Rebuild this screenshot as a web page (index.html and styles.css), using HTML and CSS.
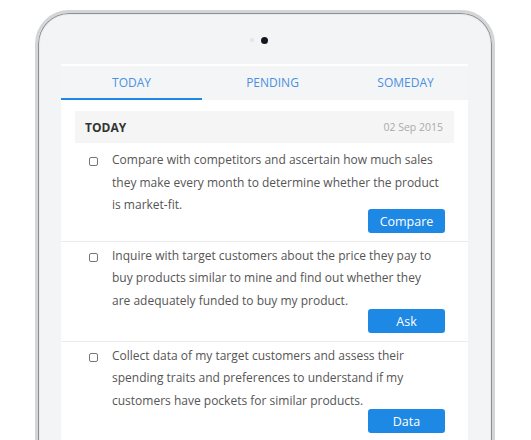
FILE: index.html
```html
<!DOCTYPE html>
<html lang="en">
<head>
<meta charset="utf-8">
<title>Tasks</title>
<link rel="stylesheet" href="styles.css">
</head>
<body>
<div class="stage">
  <div class="device">
    <div class="camera">
      <span class="sensor"></span>
      <span class="lens"></span>
      <span></span>
    </div>
    <div class="screen">
      <nav class="tabs">
        <div class="tab active">TODAY</div>
        <div class="tab">PENDING</div>
        <div class="tab">SOMEDAY</div>
      </nav>
      <div class="head-wrap">
        <div class="section-head">
          <span class="section-title">TODAY</span>
          <span class="section-date">02 Sep 2015</span>
        </div>
      </div>
      <ul class="tasks">
        <li class="task task-first">
          <div class="task-row">
            <span class="check"></span>
            <p class="task-text">Compare with competitors and ascertain how much sales they make every month to determine whether the product is market-fit.</p>
          </div>
          <button class="btn">Compare</button>
        </li>
        <li class="task">
          <div class="task-row">
            <span class="check"></span>
            <p class="task-text">Inquire with target customers about the price they pay to buy products similar to mine and find out whether they are adequately funded to buy my product.</p>
          </div>
          <button class="btn">Ask</button>
        </li>
        <li class="task">
          <div class="task-row">
            <span class="check"></span>
            <p class="task-text">Collect data of my target customers and assess their spending traits and preferences to understand if my customers have pockets for similar products.</p>
          </div>
          <button class="btn">Data</button>
        </li>
      </ul>
    </div>
  </div>
</div>
</body>
</html>
```
FILE: styles.css
```css
* { box-sizing: border-box; }
html, body {
  margin: 0;
  padding: 0;
  background: #ffffff;
  height: 440px;
  overflow: hidden;
}
body {
  font-family: "Open Sans", "Noto Sans", sans-serif;
}
.stage {
  padding: 10px 0 0 35px;
}
.device {
  width: 460px;
  height: 520px;
  border-radius: 34px;
  border: 3px solid #d4d5d7;
  box-shadow: inset 0 0 0 1px #8f9094, inset 0 0 0 2px #e9eaec;
  background: #f3f4f6;
  padding: 0 24px 0 23px;
}
.camera {
  height: 51px;
  padding-top: 3px;
  display: grid;
  grid-template-columns: 1fr auto 1fr;
  align-items: center;
}
.sensor {
  justify-self: end;
  width: 4px;
  height: 4px;
  border-radius: 50%;
  background: #e4e5e8;
  margin-right: 7px;
}
.lens {
  width: 7px;
  height: 7px;
  border-radius: 50%;
  background: #15171f;
}
.screen {
  background: #ffffff;
  width: 407px;
  height: 480px;
  overflow: hidden;
}
.tabs {
  margin-top: 2px;
  display: grid;
  grid-template-columns: 141px 141px 1fr;
  background: #f4f5f7;
  height: 34px;
}
.tab {
  display: flex;
  align-items: center;
  justify-content: center;
  font-size: 12px;
  color: #4a90e2;
  border-bottom: 2px solid transparent;
  padding-top: 1px;
}
.tab.active {
  border-bottom-color: #1e88e5;
}
.head-wrap {
  padding: 11px 14px 3.5px;
}
.section-head {
  height: 32px;
  background: #f5f5f5;
  display: flex;
  align-items: center;
  justify-content: space-between;
  padding: 0 11px 0 10px;
}
.section-title {
  font-weight: 700;
  font-size: 12px;
  color: #333333;
}
.section-date {
  font-size: 10.5px;
  color: #aaaaaa;
}
.tasks {
  list-style: none;
  margin: 0;
  padding: 0;
}
.task {
  padding: 2.5px 23px 8px 28px;
  border-bottom: 1px solid #ececec;
  display: flex;
  flex-direction: column;
}
.task-row {
  display: flex;
  align-items: flex-start;
  padding-right: 4.5px;
}
.check {
  flex: none;
  width: 9px;
  height: 9px;
  margin-top: 8px;
  border: 1px solid #777777;
  border-radius: 2px;
}
.task-text {
  margin: 0 0 0 14px;
  font-size: 12px;
  line-height: 22.5px;
  color: #555555;
}
.btn {
  align-self: flex-end;
  width: 77px;
  height: 24px;
  margin-top: -3px;
  border: none;
  border-radius: 3px;
  background: #1e88e5;
  color: #ffffff;
  font-family: "Open Sans", "Noto Sans", sans-serif;
  font-size: 12.5px;
  padding: 0;
}
.task-first .btn {
  margin-top: -7.5px;
}
```
